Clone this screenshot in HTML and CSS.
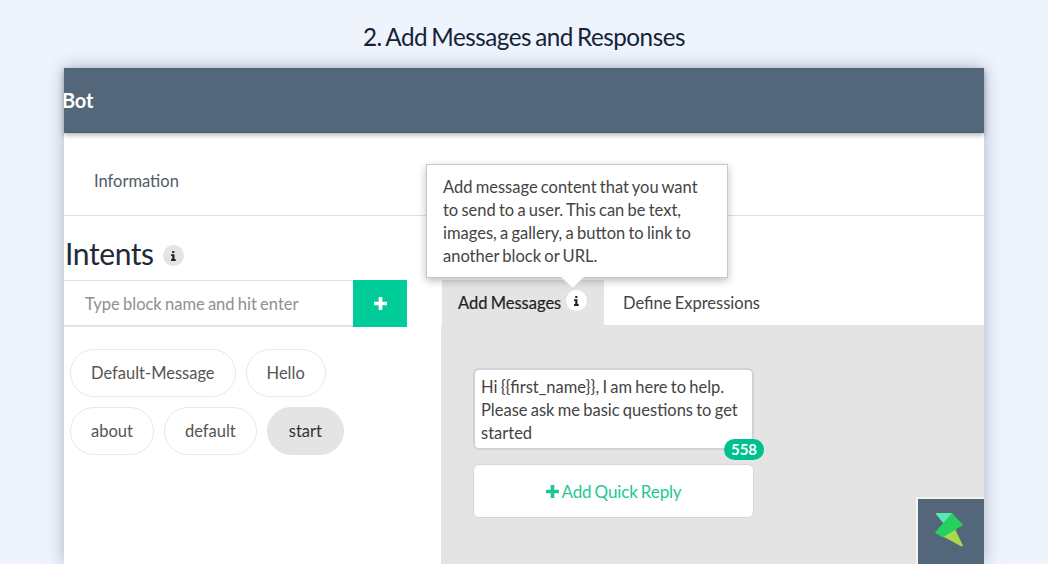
FILE: index.html
```html
<!DOCTYPE html>
<html lang="en">
<head>
    <meta charset="UTF-8">
    <meta name="viewport" content="width=device-width, initial-scale=1.0">
    <title>Add Messages and Responses</title>
    <link rel="stylesheet" href="styles.css">
</head>
<body>
<h1 class="page-title">2. Add Messages and Responses</h1>

<div class="window">
    <div class="topbar"><span class="bot-name">Bot</span></div>

    <div class="nav">
        <span class="nav-item">Information</span>
    </div>

    <div class="columns">
        <!-- Intents list -->
        <div class="left">
            <h2 class="intents-title">Intents
                <span class="info info-grey">
                    <svg viewBox="0 0 10 14" width="7" height="10"><path d="M3.2 0h3v2.6h-3zM1.5 4.4h4.9v6.9h1.7V14H1.5v-2.7h1.7V7.1H1.5z"/></svg>
                </span>
            </h2>
            <div class="block-form">
                <div class="block-input">Type block name and hit enter</div>
                <div class="block-add">
                    <svg viewBox="0 0 14 14" width="13" height="13"><path d="M5 0h4v5h5v4H9v5H5V9H0V5h5z"/></svg>
                </div>
            </div>
            <div class="chips">
                <span class="chip">Default-Message</span>
                <span class="chip">Hello</span>
                <span class="chip">about</span>
                <span class="chip">default</span>
                <span class="chip chip-active">start</span>
            </div>
        </div>

        <!-- Message editor -->
        <div class="right">
            <div class="tabs">
                <div class="tab tab-active">Add Messages
                    <span class="info info-white">
                        <svg viewBox="0 0 10 14" width="7" height="10"><path d="M3.2 0h3v2.6h-3zM1.5 4.4h4.9v6.9h1.7V14H1.5v-2.7h1.7V7.1H1.5z"/></svg>
                    </span>
                </div>
                <div class="tab">Define Expressions</div>
            </div>
            <div class="editor">
                <div class="message">Hi {{first_name}}, I am here to help. Please ask me basic questions to get started
                    <span class="count">558</span>
                </div>
                <div class="quick-reply">
                    <svg viewBox="0 0 14 14" width="13" height="13"><path d="M5 0h4v5h5v4H9v5H5V9H0V5h5z"/></svg>
                    Add Quick Reply
                </div>
            </div>
        </div>
    </div>

    <div class="tooltip">Add message content that you want to send to a user. This can be text, images, a gallery, a button to link to another block or URL.</div>

    <div class="logo-box">
        <svg viewBox="0 0 28 34" width="28" height="34">
            <path d="M1 0.5h16l-8 10z" fill="#5ce6b8" stroke="#5ce6b8" stroke-linejoin="round"/>
            <path d="M8 23l10-10 9.500 19.500-1 .5z" fill="#a5d94e" stroke="#a5d94e" stroke-linejoin="round"/>
            <path d="M17 0.500l10.500 11.500-20 12-7-4.500z" fill="#24d160" stroke="#24d160" stroke-linejoin="round"/>
        </svg>
    </div>
</div>
</body>
</html>
```

FILE: styles.css
```css
* {
    box-sizing: border-box;
}
body {
    margin: 0;
    height: 564px;
    overflow: hidden;
    background: #eef3fc;
    font-family: Lato, sans-serif;
    color: #4a4a4a;
    word-spacing: -1px;
}
.page-title {
    margin: 0;
    height: 68px;
    padding-top: 22px;
    font-size: 24.250px;
    line-height: 30px;
    font-weight: 400;
    text-align: center;
    letter-spacing: -0.5px;
    word-spacing: -1.5px;
    color: #14233a;
}
.window {
    position: relative;
    margin: 0 64px;
    height: 496px;
    background: #fff;
    box-shadow: 0 0 16px rgba(70, 90, 120, 0.4);
}
.topbar {
    height: 65px;
    background: #54667a;
    border-bottom: 1px solid #4a5a6c;
    box-shadow: 0 2px 5px rgba(0, 0, 0, 0.3);
    display: flex;
    align-items: center;
    overflow: hidden;
}
.bot-name {
    margin-left: -2px;
    font-size: 20px;
    font-weight: 700;
    letter-spacing: -0.2px;
    color: #fff;
}
.nav {
    height: 83px;
    padding: 14px 30px 0;
    border-bottom: 1px solid #dfdfdf;
    display: flex;
    align-items: center;
}
.nav-item {
    font-size: 16.500px;
    color: #4f5b67;
}
.columns {
    display: grid;
    grid-template-columns: 377px 1fr;
    height: 348px;
}
.left {
    padding-top: 20px;
}
.intents-title {
    margin: 0 0 10px 1px;
    height: 34px;
    font-size: 30px;
    line-height: 36px;
    font-weight: 400;
    letter-spacing: -0.4px;
    color: #222b35;
    display: flex;
    align-items: center;
    gap: 9px;
}
.info {
    display: inline-flex;
    align-items: center;
    justify-content: center;
    width: 21px;
    height: 21px;
    border-radius: 50%;
}
.info svg {
    fill: #222;
}
.info-grey {
    background: #e4e4e4;
    margin-top: 5px;
}
.info-white {
    background: #fff;
    margin-top: -4px;
}
.block-form {
    display: flex;
    width: 343px;
    height: 47px;
}
.block-input {
    flex: 1;
    padding-left: 21px;
    font-size: 16.500px;
    line-height: 47px;
    color: #8f8f8f;
    border-top: 1px solid #dde3ea;
    border-bottom: 2px solid #dde3ea;
}
.block-add {
    width: 54px;
    padding-bottom: 1px;
    background: #00cc99;
    display: flex;
    align-items: center;
    justify-content: center;
}
.block-add svg {
    fill: #fff;
}
.chips {
    display: flex;
    flex-wrap: wrap;
    gap: 10px;
    width: 300px;
    margin: 22px 0 0 6px;
}
.chip {
    height: 48px;
    padding: 0 20px;
    border: 1px solid #e8e8e8;
    border-radius: 24px;
    font-size: 16.500px;
    line-height: 46px;
    color: #555;
}
.chip-active {
    padding: 0 21px;
    background: #e4e4e4;
    border-color: #e4e4e4;
    color: #333;
}
.right {
    display: flex;
    flex-direction: column;
    padding-left: 1px;
}
.tabs {
    display: flex;
    height: 109px;
    padding-top: 64px;
}
.tab {
    height: 45px;
    padding: 0 19px;
    font-size: 16.500px;
    line-height: 44px;
    color: #444;
    display: flex;
    align-items: center;
}
.tab-active {
    width: 162px;
    padding-left: 16px;
    padding-right: 0;
    gap: 5px;
    background: #e4e4e4;
    color: #222;
    -webkit-text-stroke: 0.2px #222;
}
.editor {
    flex: 1;
    padding: 43px 0 0 32px;
    background: #e4e4e4;
    margin-left: -1px;
}
.message {
    position: relative;
    width: 281px;
    height: 82px;
    padding: 6px 6px;
    background: #fff;
    border: 2px solid #cfd2d8;
    border-radius: 6px;
    font-size: 16.500px;
    line-height: 23px;
    color: #444;
}
.count {
    position: absolute;
    right: -12px;
    bottom: -12px;
    width: 40px;
    height: 21px;
    border-radius: 11px;
    background: #00c08f;
    color: #fff;
    font-size: 15px;
    font-weight: 700;
    line-height: 21px;
    text-align: center;
}
.quick-reply {
    width: 281px;
    height: 54px;
    margin-top: 14px;
    background: #fff;
    border: 1px solid #d6d6d6;
    border-radius: 6px;
    font-size: 17px;
    letter-spacing: -0.15px;
    color: #1fc796;
    display: flex;
    align-items: center;
    justify-content: center;
    gap: 3px;
}
.quick-reply svg {
    fill: #1fc796;
}
.tooltip {
    position: absolute;
    left: 362px;
    top: 96px;
    width: 302px;
    height: 114px;
    padding: 11px 16px;
    background: #fff;
    border: 1px solid #c8c8c8;
    box-shadow: 0 3px 8px rgba(0, 0, 0, 0.25);
    font-size: 16.500px;
    line-height: 23px;
    color: #444;
}
.tooltip::after {
    content: "";
    position: absolute;
    left: 134px;
    bottom: -12px;
    width: 22px;
    height: 22px;
    background: #fff;
    transform: rotate(45deg) scale(0.7);
    border-right: 1px solid #cfcfcf;
    border-bottom: 1px solid #cfcfcf;
}
.logo-box {
    position: absolute;
    right: 0;
    bottom: 0;
    width: 68px;
    height: 67px;
    background: #54667a;
    border-top: 2px solid #f4f4f4;
    border-left: 2px solid #f4f4f4;
    padding: 14px 0 0 17px;
}
```
